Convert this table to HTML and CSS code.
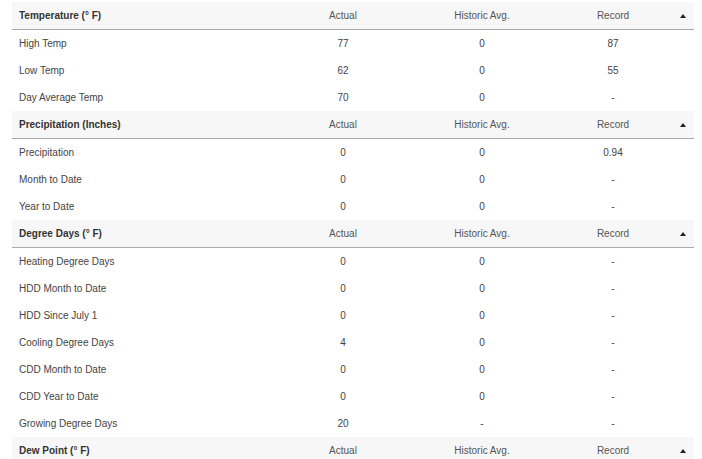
FILE: index.html
```html
<!DOCTYPE html>
<html>
<head>
<meta charset="utf-8">
<link rel="stylesheet" href="styles.css">
</head>
<body>
<div class="table">
  <div class="section">
    <div class="row head"><div class="label">Temperature (° F)</div><div>Actual</div><div>Historic Avg.</div><div>Record</div><div class="arrow"><span class="tri"></span></div></div>
    <div class="row"><div class="label">High Temp</div><div>77</div><div>0</div><div>87</div><div></div></div>
    <div class="row"><div class="label">Low Temp</div><div>62</div><div>0</div><div>55</div><div></div></div>
    <div class="row"><div class="label">Day Average Temp</div><div>70</div><div>0</div><div>-</div><div></div></div>
  </div>
  <div class="section">
    <div class="row head"><div class="label">Precipitation (Inches)</div><div>Actual</div><div>Historic Avg.</div><div>Record</div><div class="arrow"><span class="tri"></span></div></div>
    <div class="row"><div class="label">Precipitation</div><div>0</div><div>0</div><div>0.94</div><div></div></div>
    <div class="row"><div class="label">Month to Date</div><div>0</div><div>0</div><div>-</div><div></div></div>
    <div class="row"><div class="label">Year to Date</div><div>0</div><div>0</div><div>-</div><div></div></div>
  </div>
  <div class="section">
    <div class="row head"><div class="label">Degree Days (° F)</div><div>Actual</div><div>Historic Avg.</div><div>Record</div><div class="arrow"><span class="tri"></span></div></div>
    <div class="row"><div class="label">Heating Degree Days</div><div>0</div><div>0</div><div>-</div><div></div></div>
    <div class="row"><div class="label">HDD Month to Date</div><div>0</div><div>0</div><div>-</div><div></div></div>
    <div class="row"><div class="label">HDD Since July 1</div><div>0</div><div>0</div><div>-</div><div></div></div>
    <div class="row"><div class="label">Cooling Degree Days</div><div>4</div><div>0</div><div>-</div><div></div></div>
    <div class="row"><div class="label">CDD Month to Date</div><div>0</div><div>0</div><div>-</div><div></div></div>
    <div class="row"><div class="label">CDD Year to Date</div><div>0</div><div>0</div><div>-</div><div></div></div>
    <div class="row"><div class="label">Growing Degree Days</div><div>20</div><div>-</div><div>-</div><div></div></div>
  </div>
  <div class="section">
    <div class="row head"><div class="label">Dew Point (° F)</div><div>Actual</div><div>Historic Avg.</div><div>Record</div><div class="arrow"><span class="tri"></span></div></div>
  </div>
</div>
</body>
</html>
```
FILE: styles.css
```css
html, body {
  margin: 0;
  padding: 0;
  background: #fff;
}
body {
  font-family: "Liberation Sans", Arial, sans-serif;
  font-size: 10px;
  color: #444;
  overflow: hidden;
}
.table {
  margin: 2px 8px 0 12px;
}
.row {
  display: grid;
  grid-template-columns: 262px 138px 140px 122px 20px;
  height: 27px;
  align-items: center;
}
.row > div {
  text-align: center;
}
.row > .label {
  text-align: left;
  padding-left: 7px;
}
.head {
  background: #f7f7f7;
  border-bottom: 1px solid #aaa;
  color: #555;
}
.head .label {
  font-weight: bold;
  color: #333;
}
.arrow {
  display: flex;
  justify-content: center;
  align-items: center;
}
.tri {
  width: 0;
  height: 0;
  border-left: 3.5px solid transparent;
  border-right: 3.5px solid transparent;
  border-bottom: 4px solid #222;
  margin-left: -2px;
}
```
